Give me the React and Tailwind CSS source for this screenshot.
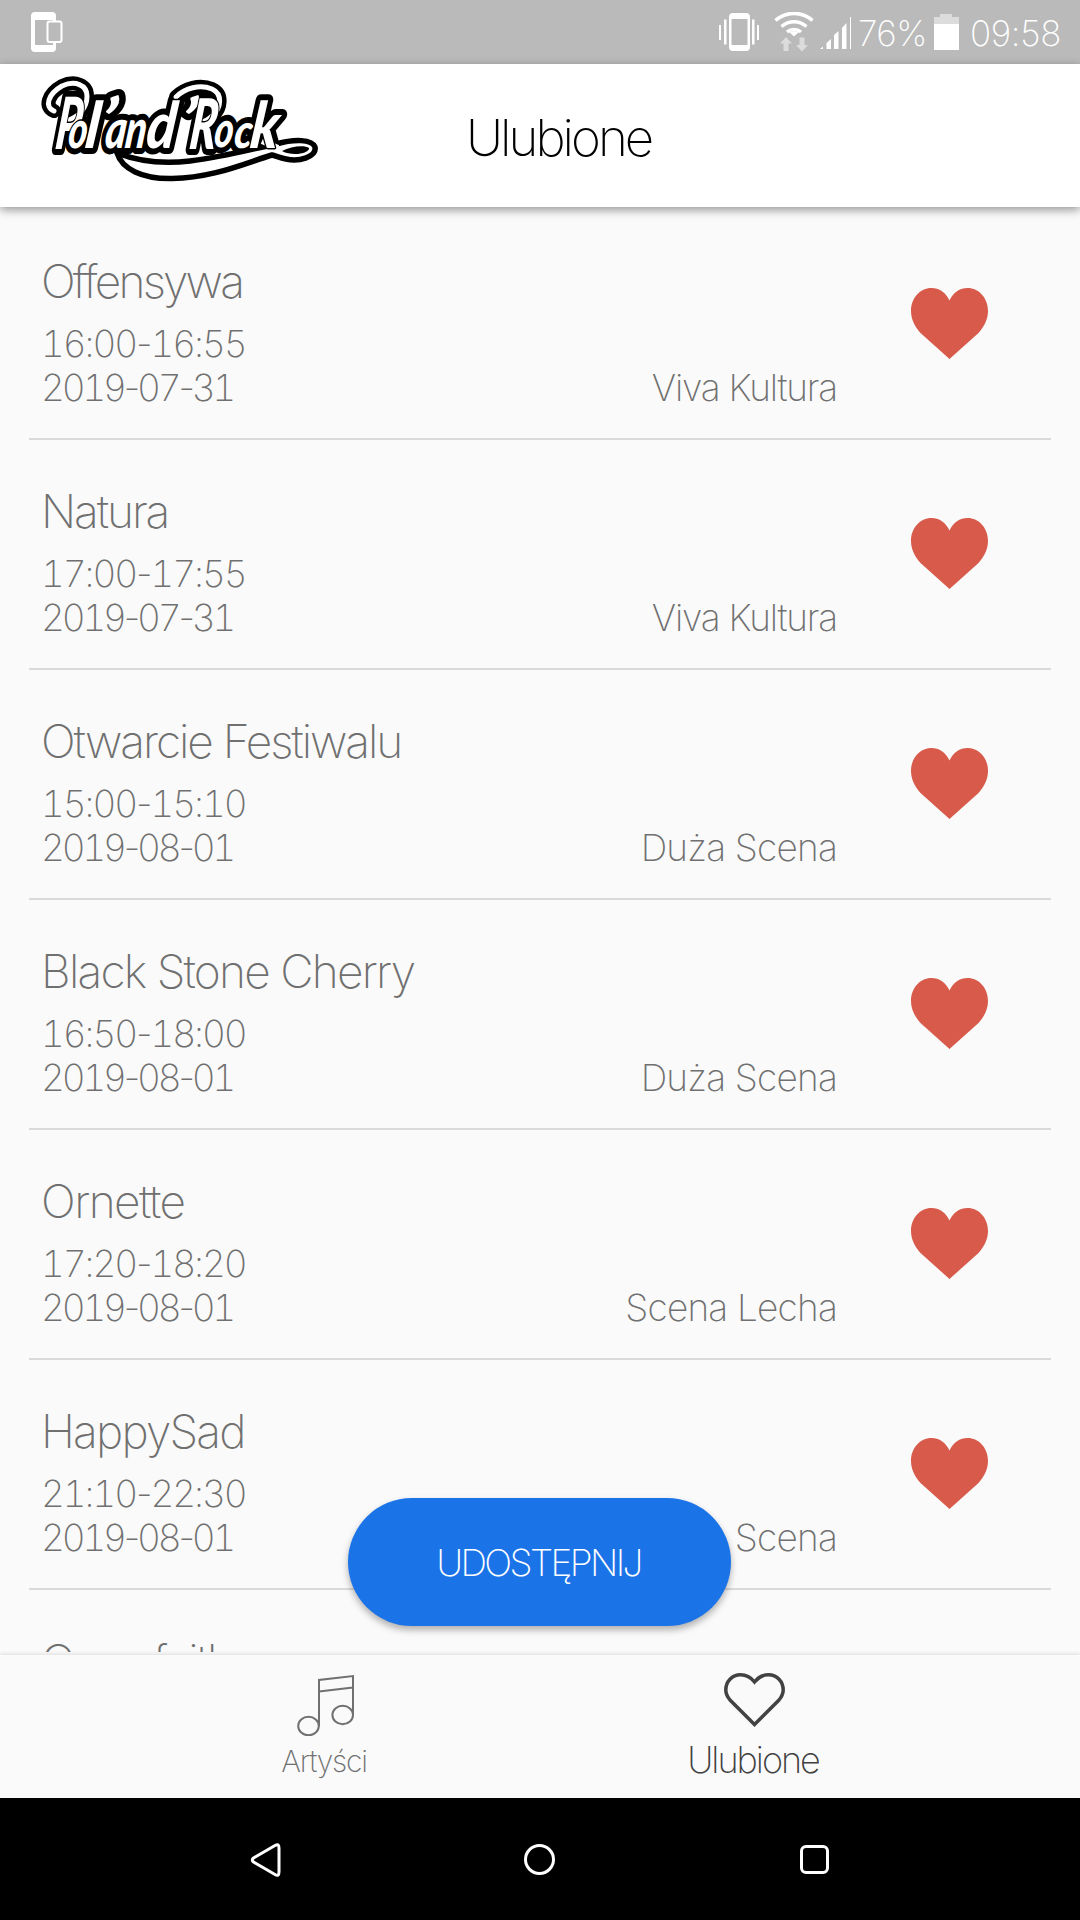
import { Fragment } from "react";

const events = [
  { name: "Offensywa", time: "16:00-16:55", date: "2019-07-31", stage: "Viva Kultura", nameTracking: "tracking-[-2.8px]", stageTracking: "tracking-[-1.2px]" },
  { name: "Natura", time: "17:00-17:55", date: "2019-07-31", stage: "Viva Kultura", nameTracking: "tracking-[-2.1px]", stageTracking: "tracking-[-1.2px]" },
  { name: "Otwarcie Festiwalu", time: "15:00-15:10", date: "2019-08-01", stage: "Duża Scena", nameTracking: "tracking-[-2.05px]", stageTracking: "tracking-[-0.8px]" },
  { name: "Black Stone Cherry", time: "16:50-18:00", date: "2019-08-01", stage: "Duża Scena", nameTracking: "tracking-[-1.75px]", stageTracking: "tracking-[-0.8px]" },
  { name: "Ornette", time: "17:20-18:20", date: "2019-08-01", stage: "Scena Lecha", nameTracking: "tracking-[-1.5px]", stageTracking: "tracking-[-0.8px]" },
  { name: "HappySad", time: "21:10-22:30", date: "2019-08-01", stage: "Duża Scena", nameTracking: "tracking-[-1.8px]", stageTracking: "tracking-[-0.8px]" },
  { name: "Crossfaith", time: "22:40-23:50", date: "2019-08-01", stage: "Duża Scena", nameTracking: "tracking-[-1.9px]", stageTracking: "tracking-[-0.8px]" },
];

// x, baseline, drawn width and font size of every letter in the logo
const logoLetters = [
  { ch: "P", x: 54, y: 149, w: 25, size: 72 },
  { ch: "o", x: 67, y: 148, w: 19, size: 52 },
  { ch: "l", x: 84, y: 148, w: 14, size: 64 },
  { ch: "’", x: 98, y: 144, w: 15, size: 64 },
  { ch: "a", x: 104, y: 148, w: 21, size: 54 },
  { ch: "n", x: 124, y: 148, w: 21, size: 54 },
  { ch: "d", x: 145, y: 148, w: 29, size: 64 },
  { ch: "’", x: 178, y: 144, w: 15, size: 64 },
  { ch: "R", x: 188, y: 149, w: 27, size: 70 },
  { ch: "o", x: 213, y: 147, w: 19, size: 50 },
  { ch: "c", x: 233, y: 148, w: 18, size: 48 },
  { ch: "k", x: 249, y: 148, w: 28, size: 64 },
];

const swashP = "M54 111C44 107 48 94 62 86C75 80 87 85 87 96C87 108 79 116 69 120";
const swashR = "M176 97C185 88 200 84 212 89C223 94 221 108 213 115C209 119 206 121 202 122";
const tail = "M117 153C140 162 165 164 190 161C222 157 248 150 276 144C294 139 312 139 315 147C317 157 299 162 286 159C280 158 276 156 272 155C243 164 212 178 172 178.500C142 179 122 169 117 153Z";

const LogoLetters = ({ className, strokeWidth }) => (
  <g className={className} strokeWidth={strokeWidth} strokeLinejoin="round" paintOrder="stroke">
    {logoLetters.map((l, i) => (
      <text key={i} transform={`translate(${l.x} ${l.y}) skewX(-7)`} fontSize={l.size} textLength={l.w} lengthAdjust="spacingAndGlyphs">
        {l.ch}
      </text>
    ))}
  </g>
);

const Logo = () => (
  <svg viewBox="42 76 278 106" className="mb-[13px] h-[106px] w-[278px] overflow-visible font-['Lato',sans-serif] font-black italic">
    <g fill="none" strokeLinecap="round" strokeLinejoin="round">
      <path d={swashP} stroke="#000" strokeWidth="14" />
      <path d={swashR} stroke="#000" strokeWidth="14" />
    </g>
    <LogoLetters className="fill-black stroke-black" strokeWidth={12} />
    <path d={tail} fill="#fff" stroke="#000" strokeWidth="5.500" strokeLinejoin="round" />
    <path d="M278 148L262 141" stroke="#fff" strokeWidth="6" />
    <g fill="none" stroke="#fff" strokeWidth="5" strokeLinecap="round">
      <path d={swashP} />
      <path d={swashR} />
    </g>
    <LogoLetters className="fill-white stroke-black" strokeWidth={3} />
    <path d="M282 151C291 146 305 145 309 148C310 153 293 157 282 151Z" fill="#000" />
  </svg>
);

const StatusBar = () => (
  <div className="flex h-16 items-center bg-[#bababa] pt-[2px] pr-[19px] pl-[31px] text-[35px] leading-none font-[150] text-white">
    <svg viewBox="0 0 32 40" className="mb-[2px] h-10 w-8">
      <rect width="25" height="40" rx="4" fill="#fff" />
      <rect x="4" y="8" width="18" height="25" fill="#bababa" />
      <rect x="16.500" y="9.500" width="14" height="20.500" rx="2" fill="#bababa" stroke="#fff" strokeWidth="2" />
    </svg>
    <svg viewBox="0 0 40 38" className="mb-[2px] ml-auto h-[38px] w-10" fill="#fff">
      <path d="M14 0h13q4 0 4 4v30q0 4-4 4H14q-4 0-4-4V4q0-4 4-4zM12.500 6v26h16V6z" fillRule="evenodd" />
      <path d="M0 12h2v15H0zM5 6.500h2.500v25H5zM33 6.500h2.500v25H33zM38 12h2v15h-2z" />
    </svg>
    <svg viewBox="0 0 40 40" className="mb-[2px] ml-[15px] h-10 w-10" fill="none" stroke="#fff" strokeWidth="3.500">
      <path d="M1.500 8.500C12-1 28-1 38.500 8.500M7.500 14.500C15 8 25 8 32.500 14.500M13 20C17 16.500 23 16.500 27 20" />
      <path d="M15.500 20.500Q20 17.500 24.500 20.500L20 24.500Z" fill="#fff" stroke="none" />
      <path d="M12 25l6 6.500h-3.500V39h-5v-7.500H6zM28 39.500l6-6.500h-3.500v-7.500h-5V33H22z" fill="#dcdcdc" stroke="none" />
    </svg>
    <svg viewBox="0 0 32 34" className="ml-[6px] h-[34px] w-8" fill="#fff">
      <path d="M0 33l3-2.500V33zM6.500 33v-6l4.500-4v10zM14 33V19l4.500-4v18zM22 33V12l4.500-5v26zM30 1h1v32h-1z" />
    </svg>
    <span className="ml-[6px] tracking-[-0.5px]">76%</span>
    <svg viewBox="0 0 25 38" className="mb-[2px] ml-[7px] h-[38px] w-[25px]">
      <path d="M0 4h6V1h12v3h7v8H0z" fill="#dcdcdc" />
      <path d="M0 11h25v26H0z" fill="#fff" />
    </svg>
    <span className="ml-[11px] tracking-[-0.3px]">09:58</span>
  </div>
);

const HeartFilled = () => (
  <svg viewBox="0 0 77 71" className="h-[71px] w-[77px]" fill="#d75a4a">
    <path d="M38.500 71L9.500 45C3 38 0 30 0 23C0 10 9 0 20.500 0C28 0 35 4.500 38.500 12.500C42 4.500 49 0 56.500 0C68 0 77 10 77 23C77 30 74 38 67.500 45Z" />
  </svg>
);

// even-width digits, narrow hyphens
const Digits = ({ children }) =>
  children.split("-").map((part, i) => (
    <Fragment key={i}>
      {i > 0 && <span className="normal-nums">-</span>}
      {part}
    </Fragment>
  ));

const EventRow = ({ event }) => (
  <li className="flex h-[230px] shrink-0 border-b-2 border-[#dadada] text-[37px] leading-[44px] text-[#707070]">
    <div className="w-[520px] pt-[43px] pl-3">
      <h2 className={`text-[46px] leading-[56px] whitespace-nowrap ${event.nameTracking}`}>{event.name}</h2>
      <p className="mt-[13px] tracking-[-2.1px] tabular-nums">
        <Digits>{event.time}</Digits>
      </p>
      <p className="tracking-[-3.2px] tabular-nums">
        <Digits>{event.date}</Digits>
      </p>
    </div>
    <p className={`w-[288px] self-end pb-7 text-right whitespace-nowrap ${event.stageTracking}`}>{event.stage}</p>
    <div className="mt-[78px] ml-[74px]">
      <HeartFilled />
    </div>
  </li>
);

const TabBar = () => (
  <nav className="relative flex h-[143px] bg-[#fafafa] pr-[110px] pl-[108px] shadow-[0_-1px_4px_rgba(0,0,0,0.12)]">
    <div className="flex flex-1 flex-col items-center pt-[19px] text-[#707070]">
      <svg viewBox="293.5 1674 60 62" className="h-[62px] w-[60px]" fill="none" stroke="#707070" strokeWidth="2">
        <path d="M318.500 1726V1680L352.500 1676V1715M318.500 1691.500L352.500 1687.500" />
        <ellipse cx="308" cy="1726" rx="10.300" ry="9.300" />
        <ellipse cx="342.200" cy="1715" rx="10.300" ry="9.300" />
      </svg>
      <span className="mt-[7px] ml-px text-[30px] leading-[36px] tracking-[-1.2px]">Artyści</span>
    </div>
    <div className="flex flex-1 flex-col items-center pt-[18px] text-[#404040]">
      <svg viewBox="0 0 61 54" className="h-[54px] w-[61px]" fill="none" stroke="#424242" strokeWidth="3.500">
        <path d="M30.500 51.500L6 27C3.500 24 1.800 20.500 1.800 17C1.800 8.500 8 1.800 16.500 1.800C22.500 1.800 27 4.500 30.500 9C34 4.500 38.500 1.800 44.500 1.800C53 1.800 59.200 8.500 59.200 17C59.200 20.500 57.500 24 55 27Z" />
      </svg>
      <span className="mt-3 mr-[3px] text-[36px] leading-[42px] tracking-[-2px]">Ulubione</span>
    </div>
  </nav>
);

const NavigationBar = () => (
  <div className="flex h-[122px] items-center bg-black pt-px pl-[250px]">
    <svg viewBox="0 0 32 36" className="h-9 w-8" fill="none" stroke="#fff" strokeWidth="3" strokeLinejoin="round">
      <path d="M25 3.500Q29 1 29 6V30Q29 35 25 32.500L3.500 20Q1 18 3.500 16Z" />
    </svg>
    <div className="ml-[242px] size-[31px] rounded-full border-3 border-white" />
    <div className="ml-[245px] size-[29px] rounded-md border-3 border-white" />
  </div>
);

const App = () => {
  return (
    <div className="flex h-[1920px] w-[1080px] flex-col overflow-hidden bg-[#fafafa] font-['Inter',sans-serif] font-[150]">
      <StatusBar />
      <header className="relative z-10 flex h-[143px] items-center bg-white pl-[42px] text-black shadow-[0_3px_9px_rgba(0,0,0,0.4)]">
        <Logo />
        <h1 className="ml-[146px] pt-1 text-[51px] leading-[60px] tracking-[-3px]">Ulubione</h1>
      </header>

      <main className="relative flex h-[1445px] flex-col">
        <ul className="mx-[29px] flex min-h-0 flex-1 flex-col overflow-hidden pt-[3px]">
          {events.map((event) => (
            <EventRow key={event.name} event={event} />
          ))}
        </ul>
        <button className="absolute bottom-[26px] left-[348px] h-32 w-[383px] rounded-full bg-[#1b73e8] pt-[2px] pr-[2px] text-[37px] tracking-[-2.6px] text-white shadow-[0_4px_7px_rgba(0,0,0,0.3)]">
          UDOSTĘPNIJ
        </button>
      </main>

      <div className="h-[3px]" />
      <TabBar />
      <NavigationBar />
    </div>
  );
};

export default App;
